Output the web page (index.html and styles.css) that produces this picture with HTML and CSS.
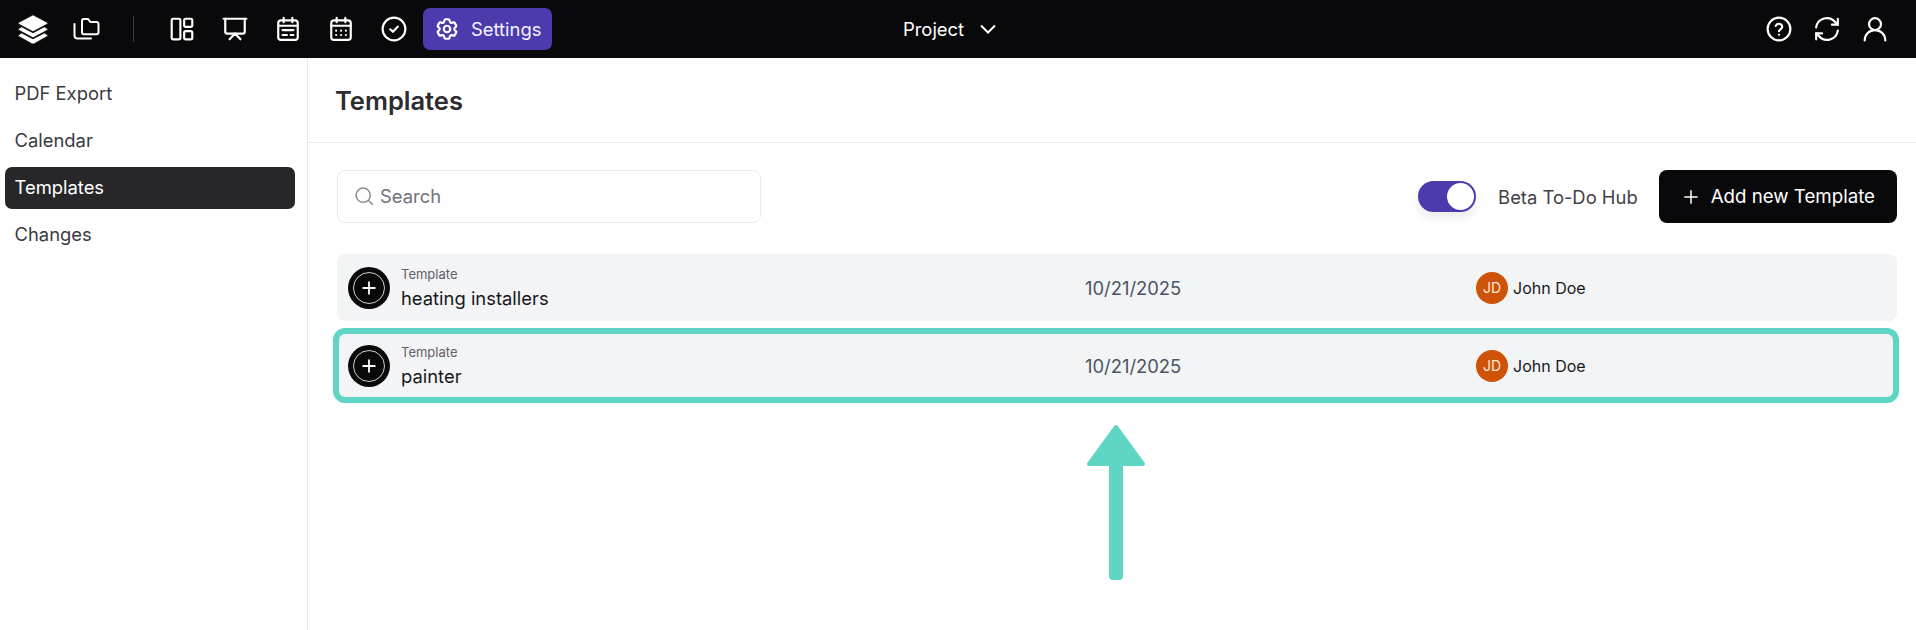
FILE: index.html
```html
<!DOCTYPE html>
<html lang="en">
<head>
  <meta charset="UTF-8">
  <meta name="viewport" content="width=device-width, initial-scale=1.0">
  <title>Templates</title>
  <link rel="stylesheet" href="styles.css">
</head>
<body>
  <header class="topbar">
    <div class="topbar-left">
      <svg class="logo" viewBox="0 0 26 26" fill="#fff" stroke="#0a0a0c" stroke-width="0.7"><path d="M13 1.500 24.500 7.600c.6.400.6 1.200 0 1.500L13 15.200 1.500 9.100c-.6-.3-.6-1.100 0-1.500z"/><path d="M3.800 11.200 13 16l9.200-4.800 2.400 1.400c.5.400.5 1.100 0 1.400L13 20.200 1.400 14c-.5-.3-.5-1 0-1.400z"/><path d="M3.800 16.200 13 21l9.200-4.800 2.400 1.400c.5.400.5 1.100 0 1.400L14 25c-.7.300-1.300.3-2 0L1.400 19c-.5-.3-.5-1 0-1.400z"/></svg>
      <svg class="icon folder" viewBox="0 0 28 24"><path d="M10 5.500V3.800C10 2.800 10.800 2 11.800 2h3.400c.6 0 1.200.3 1.500.8l1 1.500c.3.5.9.8 1.500.8h5.300c1.100 0 2 .9 2 2v8.100c0 1.100-.9 2-2 2H12c-1.100 0-2-.9-2-2z"/><path d="M5.500 7v11.500c0 1.700 1.300 3 3 3h13.500" transform="translate(-3 0)"/></svg>
      <span class="divider"></span>
      <svg class="icon" viewBox="0 0 24 24"><rect x="2.500" y="2.500" width="8" height="19" rx="1.500"/><rect x="14" y="2.500" width="7.500" height="7.500" rx="1.500"/><rect x="14" y="14" width="7.500" height="7.500" rx="1.500"/></svg>
      <svg class="icon" viewBox="0 0 24 24"><path d="M1.500 2.500h21"/><path d="M3 2.500v12c0 1 .7 1.700 1.700 1.700h14.600c1 0 1.700-.7 1.700-1.700v-12"/><path d="m12 16.200-5 5.300M12 16.200l5 5.300"/></svg>
      <svg class="icon" viewBox="0 0 24 24"><rect x="3" y="4" width="18" height="18" rx="2.500"/><path d="M3 9h18M8 1.800v4M16 1.800v4M7 13h10M7 17.500h4M14.500 17.500H17"/></svg>
      <svg class="icon" viewBox="0 0 24 24"><rect x="3" y="4" width="18" height="18" rx="2.500"/><path d="M3 9h18M8 1.800v4M16 1.800v4M7.500 13.500h.01M12 13.500h.01M16.500 13.500h.01M7.500 17.500h.01M12 17.500h.01M16.500 17.500h.01"/></svg>
      <svg class="icon" viewBox="0 0 24 24"><circle cx="12" cy="12" r="10.500"/><path d="m8.500 12.300 2.500 2.300 4.500-4.800"/></svg>
      <a class="nav-active">
        <svg class="icon" viewBox="0 0 24 24"><path d="M9.594 3.940c.09-.542.560-.940 1.110-.940h2.593c.550 0 1.020.398 1.110.940l.213 1.281c.063.374.313.686.645.870.074.040.147.083.22.127.325.196.720.257 1.075.124l1.217-.456a1.125 1.125 0 0 1 1.370.490l1.296 2.247a1.125 1.125 0 0 1-.260 1.431l-1.003.827c-.293.241-.438.613-.430.992a7 7 0 0 1 0 .255c-.008.378.137.750.430.991l1.004.827c.424.350.534.955.260 1.430l-1.298 2.247a1.125 1.125 0 0 1-1.369.491l-1.217-.456c-.355-.133-.750-.072-1.076.124a7 7 0 0 1-.22.128c-.331.183-.581.495-.644.869l-.213 1.281c-.090.543-.560.940-1.110.940h-2.594c-.550 0-1.019-.398-1.110-.940l-.213-1.281c-.062-.374-.312-.686-.644-.870a7 7 0 0 1-.220-.127c-.325-.196-.720-.257-1.076-.124l-1.217.456a1.125 1.125 0 0 1-1.369-.490l-1.297-2.247a1.125 1.125 0 0 1 .260-1.431l1.004-.827c.292-.240.437-.613.430-.991a7 7 0 0 1 0-.255c.007-.380-.138-.751-.430-.992l-1.004-.827a1.125 1.125 0 0 1-.260-1.430l1.297-2.247a1.125 1.125 0 0 1 1.370-.491l1.216.456c.356.133.751.072 1.076-.124.072-.044.146-.086.220-.128.332-.183.582-.495.644-.869z"/><circle cx="12" cy="12" r="3"/></svg>
        Settings
      </a>
    </div>
    <div class="topbar-center">
      <span>Project</span>
      <svg class="chevron" viewBox="0 0 24 24"><path d="m5 8.500 7 7 7-7"/></svg>
    </div>
    <div class="topbar-right">
      <svg class="icon" viewBox="0 0 24 24"><circle cx="12" cy="12" r="10.500"/><path d="M9 9.200a3.100 3.100 0 0 1 6 .8c0 2-3 2.400-3 4"/><path d="M12 17.300h.01"/></svg>
      <svg class="icon" viewBox="0 0 24 24"><path d="M2 10.500A10 10 0 0 1 19.500 5.500L22 8"/><path d="M22 2.500V8h-5.500"/><path d="M22 13.500A10 10 0 0 1 4.500 18.500L2 16"/><path d="M2 21.500V16h5.500"/></svg>
      <svg class="icon" viewBox="0 0 24 24"><circle cx="12" cy="7.500" r="5.500"/><path d="M2.500 22.500c0-5.300 4.200-9.500 9.500-9.500s9.500 4.200 9.500 9.500"/></svg>
    </div>
  </header>

  <div class="layout">
    <aside class="sidebar">
      <a class="side-item">PDF Export</a>
      <a class="side-item">Calendar</a>
      <a class="side-item active">Templates</a>
      <a class="side-item">Changes</a>
    </aside>

    <main class="content">
      <div class="content-head">
        <h1>Templates</h1>
      </div>

      <div class="toolbar">
        <div class="search">
          <svg viewBox="0 0 24 24"><circle cx="11" cy="11" r="8.500"/><path d="m17.500 17.500 4.500 4.500"/></svg>
          <span>Search</span>
        </div>
        <div class="toolbar-right">
          <span class="toggle"><span class="knob"></span></span>
          <span class="toggle-label">Beta To-Do Hub</span>
          <button class="add-btn">
            <svg viewBox="0 0 24 24"><path d="M12 4v16M4 12h16"/></svg>
            Add new Template
          </button>
        </div>
      </div>

      <div class="list">
        <div class="row">
          <div class="row-name">
            <span class="plus-badge"><svg viewBox="0 0 42 42"><circle cx="21" cy="21" r="15.500"/><path d="M21 14.500v13M14.500 21h13"/></svg></span>
            <div>
              <div class="row-label">Template</div>
              <div class="row-title">heating installers</div>
            </div>
          </div>
          <div class="row-date">10/21/2025</div>
          <div class="row-owner"><span class="avatar">JD</span>John Doe</div>
        </div>
        <div class="row highlighted">
          <div class="row-name">
            <span class="plus-badge"><svg viewBox="0 0 42 42"><circle cx="21" cy="21" r="15.500"/><path d="M21 14.500v13M14.500 21h13"/></svg></span>
            <div>
              <div class="row-label">Template</div>
              <div class="row-title">painter</div>
            </div>
          </div>
          <div class="row-date">10/21/2025</div>
          <div class="row-owner"><span class="avatar">JD</span>John Doe</div>
        </div>
      </div>

      <!-- annotation arrow -->
      <svg class="arrow" viewBox="0 0 60 156"><path d="M30 3 57 40H3z" fill="#5fd6c4" stroke="#5fd6c4" stroke-width="4" stroke-linejoin="round"/><rect x="23" y="38" width="14" height="118" rx="4" fill="#5fd6c4"/></svg>
    </main>
  </div>
</body>
</html>
```

FILE: styles.css
```css
/* Reset */
* {
  margin: 0;
  padding: 0;
  box-sizing: border-box;
}
body {
  display: flex;
  flex-direction: column;
  height: 100vh;
  overflow: hidden;
  background: #fff;
  font-family: Inter, "Liberation Sans", sans-serif;
  color: #27272a;
}
/* top bar */
.topbar {
  position: relative;
  display: flex;
  align-items: center;
  justify-content: space-between;
  height: 58px;
  flex-shrink: 0;
  background: #09090b;
  color: #fff;
}
.topbar-left {
  display: flex;
  align-items: center;
  padding-left: 17px;
}
.icon {
  width: 26px;
  height: 26px;
  fill: none;
  stroke: #fff;
  stroke-width: 2;
  stroke-linecap: round;
  stroke-linejoin: round;
  flex-shrink: 0;
}
.logo {
  width: 32px;
  height: 32px;
  margin-right: 23px;
}
.folder {
  width: 28px;
  height: 24px;
}
.divider {
  width: 1px;
  height: 26px;
  background: #3f3f46;
  margin: 0 35px 0 33px;
}
.topbar-left > .icon:not(.folder) {
  margin-right: 27px;
}
.topbar-left > .icon:nth-of-type(7) {
  margin-right: 16px;
}
.nav-active {
  display: flex;
  align-items: center;
  gap: 11px;
  height: 42px;
  padding: 0 11px;
  border-radius: 7px;
  background: #4c3bad;
  font-size: 18.4px;
  color: #f4f2ff;
}
.topbar-center {
  position: absolute;
  left: 903px;
  top: 0;
  bottom: 0;
  display: flex;
  align-items: center;
  gap: 12px;
  font-size: 18.4px;
}
.chevron {
  width: 24px;
  height: 24px;
  fill: none;
  stroke: #fff;
  stroke-width: 2;
}
.topbar-right {
  display: flex;
  align-items: center;
  gap: 22px;
  padding-right: 28px;
}
/* page body */
.layout {
  display: flex;
  flex: 1;
  min-height: 0;
}
.sidebar {
  width: 308px;
  flex-shrink: 0;
  display: flex;
  flex-direction: column;
  gap: 5px;
  padding: 14.5px 12px 0 5px;
  border-right: 1px solid #e9e9ec;
}
.side-item {
  display: flex;
  align-items: center;
  height: 42px;
  padding: 0 0 1px 9.5px;
  border-radius: 7px;
  font-size: 18.4px;
  color: #3a3a40;
}
.side-item.active {
  background: #27272a;
  color: #fff;
}
.content {
  position: relative;
  flex: 1;
  min-width: 0;
}
.content-head {
  display: flex;
  align-items: center;
  height: 85px;
  padding-left: 27px;
  border-bottom: 1px solid #e9e9ec;
}
.content-head h1 {
  font-size: 25.5px;
  font-weight: 600;
  color: #2d2d30;
}
/* toolbar */
.toolbar {
  display: flex;
  align-items: center;
  justify-content: space-between;
  margin: 27px 19px 0 29px;
}
.search {
  display: flex;
  align-items: center;
  gap: 6px;
  width: 424px;
  height: 53px;
  padding: 0 0 2px 16px;
  border: 1px solid #ebebee;
  border-radius: 8px;
  font-size: 18.4px;
  color: #71717a;
}
.search svg {
  width: 20px;
  height: 20px;
  fill: none;
  stroke: #8a8a92;
  stroke-width: 1.8;
  stroke-linecap: round;
}
.toolbar-right {
  display: flex;
  align-items: center;
}
.toggle {
  display: flex;
  align-items: center;
  justify-content: flex-end;
  width: 58px;
  height: 31px;
  padding-right: 2px;
  border-radius: 16px;
  background: #4c3bad;
  box-shadow: 0 6px 10px rgba(0, 0, 0, 0.08);
}
.knob {
  width: 27px;
  height: 27px;
  border-radius: 50%;
  background: #fff;
}
.toggle-label {
  margin: 0 21px 0 22px;
  font-size: 18.4px;
  color: #3f3f46;
}
.add-btn {
  display: flex;
  align-items: center;
  gap: 10px;
  height: 53px;
  padding: 0 22px;
  border: none;
  border-radius: 8px;
  background: #09090b;
  color: #fff;
  font-family: inherit;
  font-size: 18.7px;
  font-weight: 400;
}
.add-btn svg {
  width: 20px;
  height: 20px;
  fill: none;
  stroke: #fff;
  stroke-width: 1.8;
}
/* template list */
.list {
  display: flex;
  flex-direction: column;
  gap: 11px;
  margin: 31px 19px 0 29px;
}
.row {
  display: grid;
  grid-template-columns: 737px 391px 1fr;
  align-items: center;
  height: 67px;
  padding-left: 11px;
  border-radius: 8px;
  background: #f3f4f6;
}
.highlighted {
  margin-right: 2px;
  outline: 6px solid #5fd6c4;
  outline-offset: -2px;
}
.row-name {
  display: flex;
  align-items: center;
  gap: 11px;
}
.plus-badge {
  width: 42px;
  height: 42px;
  flex-shrink: 0;
  border-radius: 50%;
  background: #09090b;
}
.plus-badge svg {
  display: block;
  width: 42px;
  height: 42px;
  fill: none;
  stroke: #fff;
}
.plus-badge circle {
  stroke-width: 0.8;
}
.plus-badge path {
  stroke-width: 1.8;
}
.row-label {
  font-size: 13px;
  line-height: 18px;
  color: #5f6068;
}
.row-title {
  margin-top: 3px;
  font-size: 18.4px;
  line-height: 24px;
  color: #18181b;
}
.row-date {
  font-size: 18.4px;
  color: #4b5563;
}
.row-owner {
  display: flex;
  align-items: center;
  gap: 5px;
  font-size: 16px;
  color: #18181b;
}
.avatar {
  display: flex;
  align-items: center;
  justify-content: center;
  width: 32px;
  height: 32px;
  border-radius: 50%;
  background: #cf5209;
  color: #fde8d8;
  font-size: 14px;
}
.arrow {
  position: absolute;
  left: 778px;
  top: 366px;
  width: 60px;
  height: 156px;
}
```
